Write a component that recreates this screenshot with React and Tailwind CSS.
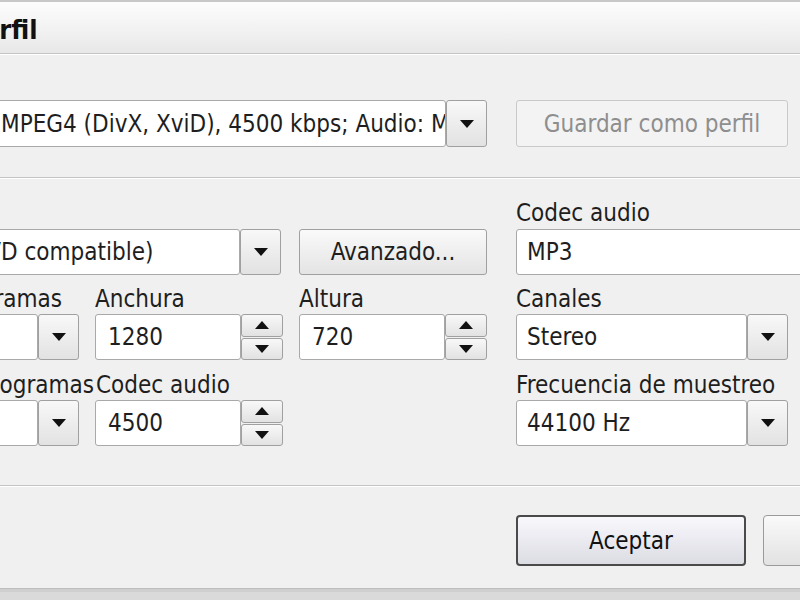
import React from "react";

const FONT = { fontFamily: '"DejaVu Sans Condensed", "DejaVu Sans", sans-serif' };

function Down() {
  return (
    <svg width="14" height="8" viewBox="0 0 14 8">
      <path d="M0 0 L14 0 L7 8 Z" fill="#111" />
    </svg>
  );
}

function Up() {
  return (
    <svg width="14" height="8" viewBox="0 0 14 8">
      <path d="M0 8 L14 8 L7 0 Z" fill="#111" />
    </svg>
  );
}

function Field({ children, className = "" }) {
  return (
    <div
      className={
        "h-full bg-white border border-[#a9a9a9] rounded-[3px] flex items-center pl-[10px] text-[#1e1e1e] whitespace-nowrap overflow-hidden " +
        className
      }
    >
      {children}
    </div>
  );
}

function Combo({ children, className = "" }) {
  return (
    <div className={"flex h-[46px] " + className}>
      <Field className="flex-1 min-w-0">{children}</Field>
      <div className="w-[41px] h-full border border-[#a0a0a0] rounded-[3px] bg-gradient-to-b from-[#f8f8f8] to-[#e2e2e2] flex items-center justify-center">
        <Down />
      </div>
    </div>
  );
}

function Spin({ children }) {
  return (
    <div className="flex h-[46px]">
      <Field className="flex-1 min-w-0 pl-[12px]">{children}</Field>
      <div className="w-[42px] flex flex-col gap-[1px]">
        <div className="flex-1 border border-[#a0a0a0] rounded-[3px] bg-gradient-to-b from-[#f8f8f8] to-[#e2e2e2] flex items-center justify-center">
          <Up />
        </div>
        <div className="flex-1 border border-[#a0a0a0] rounded-[3px] bg-gradient-to-b from-[#f8f8f8] to-[#e2e2e2] flex items-center justify-center">
          <Down />
        </div>
      </div>
    </div>
  );
}

function Label({ children, className = "" }) {
  return (
    <div className={"flex items-end pb-[2px] text-[#1e1e1e] whitespace-nowrap " + className}>
      {children}
    </div>
  );
}

function Separator() {
  return (
    <div className="w-full">
      <div className="h-[1px] bg-[#c4c4c4]" />
      <div className="h-[1px] bg-[#ffffff]" />
    </div>
  );
}

// text that starts left of the window edge: the hidden part ends at x = 0
function Clipped({ hidden, shown, w = 110 }) {
  return (
    <>
      <span className="inline-block text-right shrink-0" style={{ width: w }}>
        {hidden}
      </span>
      <span>{shown}</span>
    </>
  );
}

export default function App() {
  return (
    <div
      className="w-[800px] h-[600px] overflow-hidden bg-[#f0f0f0] text-[24px] leading-[26px] flex flex-col"
      style={FONT}
    >
      {/* TITLE */}
      <div className="h-[2px] bg-[#c8c8c8] shrink-0" />
      <div className="h-[51px] shrink-0 bg-gradient-to-b from-[#fdfdfd] to-[#e8e8e8] flex items-center pt-[5px]">
        <span className="font-bold text-[27px] text-[#111] ml-[-35px]">Perfil</span>
      </div>
      <Separator />

      {/* PROFILE ROW */}
      <div className="flex mt-[45px] ml-[-120px] shrink-0">
        <Combo className="w-[607px] h-[47px]">
          <Clipped hidden="Vídeo: " shown="MPEG4 (DivX, XviD), 4500 kbps; Audio: MP3" />
        </Combo>
        <div className="ml-[29px] w-[272px] h-[47px] shrink-0 border border-[#c9c9c9] rounded-[3px] bg-[#f3f3f3] text-[#8e8e8e] flex items-center justify-center">
          Guardar como perfil
        </div>
      </div>

      <div className="mt-[30px] shrink-0">
        <Separator />
      </div>

      {/* SETTINGS GRID */}
      <div className="grid grid-cols-[199px_188px_188px_300px] grid-rows-[50px_46px_39px_46px_40px_46px] gap-x-[16px] ml-[-120px] shrink-0">
        <div className="col-span-3" />
        <div className="ml-[13px] flex items-end pb-[3px] text-[#1e1e1e]">Codec audio</div>

        <Combo className="col-span-2 mr-[2px]">
          <Clipped hidden="Xvid (DV" shown="D compatible)" />
        </Combo>
        <div className="h-[46px] border border-[#a0a0a0] rounded-[3px] bg-gradient-to-b from-[#fafafa] to-[#e4e4e4] flex items-center justify-center text-[#1e1e1e]">
          Avanzado...
        </div>
        <Field className="ml-[13px]">MP3</Field>

        <Label className="justify-end pr-[17px]">Velocidad de fotogramas</Label>
        <Label>Anchura</Label>
        <Label>Altura</Label>
        <Label className="ml-[13px]">Canales</Label>

        <Combo>
          <Clipped hidden="25" shown="" w={100} />
        </Combo>
        <Spin>1280</Spin>
        <Spin>720</Spin>
        <Combo className="ml-[13px] w-[272px]">Stereo</Combo>

        <Label className="justify-end mr-[-15px]">Bits por fotogramas</Label>
        <Label className="pl-[1px]">Codec audio</Label>
        <div />
        <Label className="ml-[13px]">Frecuencia de muestreo</Label>

        <Combo>
          <Clipped hidden="Auto" shown="" w={100} />
        </Combo>
        <Spin>4500</Spin>
        <div />
        <Combo className="ml-[13px] w-[272px]">44100 Hz</Combo>
      </div>

      <div className="mt-[39px] shrink-0">
        <Separator />
      </div>

      {/* BUTTONS */}
      <div className="flex mt-[28px] ml-[516px] gap-[17px] shrink-0">
        <div className="w-[230px] h-[51px] shrink-0 border-2 border-[#4a4a4a] rounded-[4px] bg-gradient-to-b from-[#f8f8fc] to-[#dcdce4] flex items-center justify-center text-[#111]">
          Aceptar
        </div>
        <div className="w-[230px] h-[51px] shrink-0 border border-[#9a9a9a] rounded-[4px] bg-gradient-to-b from-[#fafafa] to-[#e2e2e2] flex items-center justify-center text-[#111]">
          Cancelar
        </div>
      </div>

      <div className="mt-[22px] shrink-0">
        <div className="h-[1px] bg-[#bcbcbc]" />
        <div className="h-[3px] bg-[#cfcfcf]" />
        <div className="h-[8px] bg-[#dadada]" />
      </div>
    </div>
  );
}
